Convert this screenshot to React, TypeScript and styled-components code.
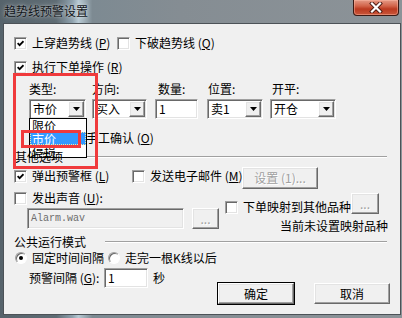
import React from 'react';
import styled, { createGlobalStyle, css } from 'styled-components';

const GlobalStyle = createGlobalStyle`
  html, body {
    margin: 0;
    padding: 0;
  }
  body {
    width: 402px;
    height: 318px;
    overflow: hidden;
    background: #7d868c;
    font-family: 'Noto Sans CJK SC', 'Liberation Sans', sans-serif;
    font-size: 12px;
    color: #000;
  }
`;

const sunken = css`
  border: 1px solid;
  border-color: #a0a0a0 #fff #fff #a0a0a0;
  box-shadow: inset 1px 1px #696969, inset -1px -1px #e3e3e3;
`;

const raised = css`
  border: 1px solid;
  border-color: #fff #696969 #696969 #fff;
  box-shadow: inset -1px -1px #a0a0a0, inset 1px 1px #e3e3e3;
`;

const CheckMark = () => (
  <svg width="7" height="7" viewBox="0 0 7 7">
    <path d="M0.6 3.2L2.6 5.2L6.5 1.2" fill="none" stroke="#000" strokeWidth="1.8" />
  </svg>
);

const Arrow = () => (
  <svg width="7" height="4" viewBox="0 0 7 4">
    <polygon points="0,0 7,0 3.5,4" fill="#000" />
  </svg>
);

const CloseGlyph = () => (
  <svg width="14" height="11" viewBox="0 0 14 11">
    <path d="M3 1.5L11 9.5M11 1.5L3 9.5" stroke="#4a1a12" strokeWidth="4" strokeLinecap="square" />
    <path d="M3 1.5L11 9.5M11 1.5L3 9.5" stroke="#fff" strokeWidth="2.2" strokeLinecap="square" />
  </svg>
);

const Check: React.FC<{ on?: boolean; label: React.ReactNode; w?: number }> = ({ on, label, w }) => (
  <Option $w={w}>
    <Box>{on && <CheckMark />}</Box>
    <span>{label}</span>
  </Option>
);

const Radio: React.FC<{ on?: boolean; label: React.ReactNode; w?: number }> = ({ on, label, w }) => (
  <Option $w={w}>
    <RadioCircle $on={on} />
    <span>{label}</span>
  </Option>
);

const Combo: React.FC<{ w: number; value: string }> = ({ w, value }) => (
  <ComboBox $w={w}>
    <ComboText>{value}</ComboText>
    <DropButton>
      <Arrow />
    </DropButton>
  </ComboBox>
);

const fields = [
  { label: '类型:', value: '市价', w: 57, col: 63, indent: 0 },
  { label: '方向:', value: '买入', w: 55, col: 63, indent: 0 },
  { label: '数量:', value: '1', w: 43, col: 52, indent: 3, edit: true },
  { label: '位置:', value: '卖1', w: 56, col: 63, indent: 1 },
  { label: '开平:', value: '开仓', w: 66, col: 66, indent: 2 },
];

const App: React.FC = () => (
  <>
    <GlobalStyle />
    <Window>
      <TitleBar>
        <Title>趋势线预警设置</Title>
        <CloseButton>
          <CloseGlyph />
        </CloseButton>
      </TitleBar>

      <Client>
        <Row $top={12} $h={14} $left={10}>
          <Check on w={103} label={<>上穿趋势线 (<Key>P</Key>)</>} />
          <Check label={<>下破趋势线 (<Key>Q</Key>)</>} />
        </Row>
        <Row $top={10} $h={14} $left={10}>
          <Check on label={<>执行下单操作 (<Key>R</Key>)</>} />
        </Row>

        <Fields>
          {fields.map(f => (
            <Field key={f.label} $w={f.col}>
              <FieldLabel $indent={f.indent}>{f.label}</FieldLabel>
              {f.edit ? <Edit $w={f.w} $h={20}>{f.value}</Edit> : <Combo w={f.w} value={f.value} />}
            </Field>
          ))}
        </Fields>

        <Row $top={12} $h={14} $left={64}>
          <Check label={<>手工确认 (<Key>O</Key>)</>} />
        </Row>

        <Header $top={5} $left={11}>
          <HeaderText>其他选项</HeaderText>
          <Rule $gap={10} />
        </Header>

        <Row $top={4} $h={16} $left={10}>
          <Check on w={118} label={<>弹出预警框 (<Key>L</Key>)</>} />
          <Check w={110} label={<>发送电子邮件 (<Key>M</Key>)</>} />
          <Button $w={76} $h={22} $disabled $self>
            设置 (1)...
          </Button>
        </Row>

        <Middle>
          <LeftCol>
            <Row $top={0} $h={16} $left={0}>
              <Check label={<>发出声音 (<Key>U</Key>):</>} />
            </Row>
            <Row $top={2} $h={21} $left={13} $gap={8}>
              <Edit $w={157} $h={21} $disabled $mono>
                Alarm.wav
              </Edit>
              <Button $w={27} $h={21} $disabled>
                ...
              </Button>
            </Row>
          </LeftCol>
          <RightCol>
            <Row $top={0} $h={21} $left={0} $end>
              <Check label="下单映射到其他品种" />
              <Button $w={28} $h={21} $disabled>
                ...
              </Button>
            </Row>
            <Note>当前未设置映射品种</Note>
          </RightCol>
        </Middle>

        <Header $top={2} $left={10}>
          <HeaderText>公共运行模式</HeaderText>
          <Rule $gap={19} />
        </Header>

        <Bottom>
          <div>
            <Row $top={0} $h={14} $left={0}>
              <Radio on w={93} label="固定时间间隔" />
              <Radio label="走完一根K线以后" />
            </Row>
            <Row $top={3} $h={20} $left={14}>
              <IntervalLabel>
                预警间隔 (<Key>G</Key>):
              </IntervalLabel>
              <Edit $w={44} $h={20}>1</Edit>
              <Unit>秒</Unit>
            </Row>
          </div>
          <Actions>
            <Button $w={76} $h={21} $default>
              确定
            </Button>
            <Button $w={76} $h={21}>
              取消
            </Button>
          </Actions>
        </Bottom>

        <DropList>
          <ListItem>限价</ListItem>
          <ListItem $selected>市价</ListItem>
          <ListItem>停损</ListItem>
        </DropList>

        <Marker $x={9} $y={49} $w={85} $h={96} />
        <Marker $x={17} $y={106} $w={60} $h={18} />
      </Client>
    </Window>
  </>
);

export default App;

const Window = styled.div`
  width: 402px;
  height: 318px;
  display: flex;
  flex-direction: column;
  background: linear-gradient(
    90deg,
    #56636b 0%,
    #5f6c74 14%,
    #8fa2ae 18%,
    #b8cad4 19.5%,
    #7d8a92 23%,
    #858d93 45%,
    #8c9398 100%
  );
`;

const TitleBar = styled.div`
  height: 23px;
  flex: none;
  display: flex;
  align-items: flex-start;
  justify-content: space-between;
`;

const Title = styled.div`
  padding: 3px 0 0 4px;
  line-height: 16px;
  font-size: 12px;
  color: #101418;
  text-shadow: 0 0 5px rgba(255, 255, 255, 0.55), 0 0 2px rgba(255, 255, 255, 0.4);
`;

const CloseButton = styled.div`
  width: 46px;
  height: 16px;
  margin-right: 3px;
  box-sizing: border-box;
  border: 1px solid #3b1a14;
  border-top: none;
  border-radius: 0 0 4px 4px;
  background: linear-gradient(180deg, #e59a86 0%, #d2644a 40%, #bb3a20 60%, #c9563a 100%);
  box-shadow: inset 0 0 0 1px rgba(255, 190, 170, 0.45);
  display: flex;
  align-items: center;
  justify-content: center;
`;

const Client = styled.div`
  position: relative;
  height: 292px;
  margin: 0 1px 0 3px;
  box-sizing: border-box;
  border: 1px solid #4c5257;
  background: #f0f0f0;
  display: flex;
  flex-direction: column;
`;

const Row = styled.div<{ $top: number; $h: number; $left: number; $gap?: number; $end?: boolean }>`
  display: flex;
  align-items: ${p => (p.$end ? 'flex-end' : 'center')};
  gap: ${p => p.$gap ?? 0}px;
  height: ${p => p.$h}px;
  margin-top: ${p => p.$top}px;
  padding-left: ${p => p.$left}px;
  flex: none;
  white-space: nowrap;
`;

const Option = styled.div<{ $w?: number }>`
  display: flex;
  align-items: center;
  gap: 5px;
  height: 14px;
  line-height: 14px;
  flex: none;
  ${p => p.$w && `width: ${p.$w}px;`}
`;

const Key = styled.span`
  text-decoration: underline;
`;

const Box = styled.span`
  flex: none;
  width: 13px;
  height: 13px;
  box-sizing: border-box;
  ${sunken};
  background: #fff;
  display: flex;
  align-items: center;
  justify-content: center;
`;

const RadioCircle = styled.span<{ $on?: boolean }>`
  flex: none;
  width: 12px;
  height: 12px;
  box-sizing: border-box;
  border-radius: 50%;
  border: 1px solid;
  border-color: #a0a0a0 #fff #fff #a0a0a0;
  box-shadow: inset 1px 1px #696969;
  background: #fff;
  display: flex;
  align-items: center;
  justify-content: center;

  &::after {
    content: '';
    width: 4px;
    height: 4px;
    border-radius: 50%;
    background: ${p => (p.$on ? '#000' : 'transparent')};
  }
`;

const Fields = styled.div`
  display: flex;
  margin-top: 7px;
  padding-left: 25px;
  flex: none;
`;

const Field = styled.div<{ $w: number }>`
  width: ${p => p.$w}px;
  flex: none;
  display: flex;
  flex-direction: column;
  gap: 2px;
`;

const FieldLabel = styled.div<{ $indent: number }>`
  height: 16px;
  line-height: 16px;
  padding-left: ${p => p.$indent}px;
`;

const ComboBox = styled.div<{ $w: number }>`
  width: ${p => p.$w}px;
  height: 20px;
  box-sizing: border-box;
  ${sunken};
  background: #fff;
  padding: 1px;
  display: flex;
  align-items: center;
`;

const ComboText = styled.span`
  flex: 1;
  padding-left: 2px;
  line-height: 16px;
  overflow: hidden;
`;

const DropButton = styled.span`
  flex: none;
  width: 16px;
  height: 16px;
  box-sizing: border-box;
  ${raised};
  background: #f0f0f0;
  display: flex;
  align-items: center;
  justify-content: center;
`;

const Edit = styled.div<{ $w: number; $h: number; $disabled?: boolean; $mono?: boolean }>`
  width: ${p => p.$w}px;
  height: ${p => p.$h}px;
  flex: none;
  box-sizing: border-box;
  ${sunken};
  background: ${p => (p.$disabled ? '#f0f0f0' : '#fff')};
  color: ${p => (p.$disabled ? '#6d6d6d' : '#000')};
  padding-left: 3px;
  line-height: ${p => p.$h - 2}px;
  ${p => p.$mono && `font-family: 'Liberation Mono', monospace; font-size: 10px;`}
`;

const Button = styled.div<{ $w: number; $h: number; $disabled?: boolean; $default?: boolean; $self?: boolean }>`
  width: ${p => p.$w}px;
  height: ${p => p.$h}px;
  flex: none;
  box-sizing: border-box;
  ${raised};
  ${p => p.$default && `outline: 1px solid #000;`}
  background: #f0f0f0;
  display: flex;
  align-items: center;
  justify-content: center;
  line-height: 14px;
  color: ${p => (p.$disabled ? '#a0a0a0' : '#000')};
  ${p => p.$disabled && `text-shadow: 1px 1px #fff;`}
  ${p => p.$self && `align-self: flex-start; margin-top: -1px;`}
`;

const Header = styled.div<{ $top: number; $left: number }>`
  display: flex;
  align-items: center;
  height: 14px;
  margin-top: ${p => p.$top}px;
  padding: 0 13px 0 ${p => p.$left}px;
  flex: none;
`;

const HeaderText = styled.span`
  position: relative;
  z-index: 2;
  line-height: 14px;
  white-space: nowrap;
`;

const Rule = styled.span<{ $gap: number }>`
  flex: 1;
  height: 0;
  margin-left: ${p => p.$gap}px;
  border-top: 1px solid #a0a0a0;
  border-bottom: 1px solid #fff;
`;

const Middle = styled.div`
  display: flex;
  margin-top: 6px;
  padding: 0 12px 0 10px;
  flex: none;
`;

const LeftCol = styled.div`
  width: 211px;
  flex: none;
`;

const RightCol = styled.div`
  flex: 1;
  padding-top: 3px;
`;

const Note = styled.div`
  margin-top: 5px;
  height: 14px;
  line-height: 14px;
  text-align: right;
  white-space: nowrap;
`;

const Bottom = styled.div`
  display: flex;
  align-items: flex-start;
  margin-top: 2px;
  padding: 0 10px 0 11px;
  flex: none;
`;

const IntervalLabel = styled.span`
  width: 75px;
  flex: none;
  line-height: 14px;
`;

const Unit = styled.span`
  margin-left: 5px;
  line-height: 14px;
`;

const Actions = styled.div`
  display: flex;
  gap: 20px;
  margin-left: auto;
  margin-top: 32px;
`;

const DropList = styled.div`
  position: absolute;
  left: 25px;
  top: 94px;
  width: 58px;
  height: 40px;
  box-sizing: border-box;
  border: 1px solid #000;
  background: #fff;
  overflow: hidden;
  z-index: 1;
`;

const ListItem = styled.div<{ $selected?: boolean }>`
  height: 13px;
  line-height: 13px;
  padding-left: 2px;
  background: ${p => (p.$selected ? '#3399ff' : 'transparent')};
  color: ${p => (p.$selected ? '#fff' : '#000')};
  ${p => p.$selected && `outline: 1px dotted #f5e6a0; outline-offset: -1px;`}
`;

const Marker = styled.div<{ $x: number; $y: number; $w: number; $h: number }>`
  position: absolute;
  left: ${p => p.$x}px;
  top: ${p => p.$y}px;
  width: ${p => p.$w}px;
  height: ${p => p.$h}px;
  box-sizing: border-box;
  border: 3px solid #f03a3c;
  z-index: 3;
  pointer-events: none;
`;
